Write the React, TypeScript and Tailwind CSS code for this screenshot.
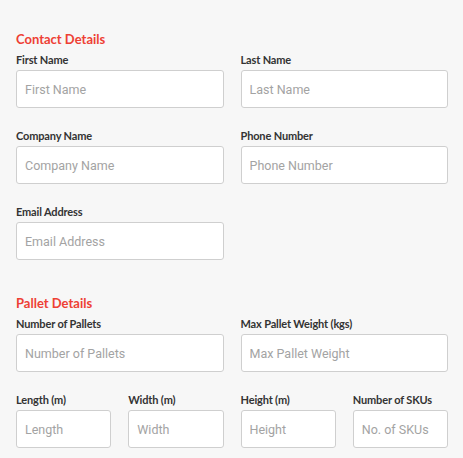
import React from "react";

type Field = {
  label: string;
  placeholder: string;
};

const contactRows: Field[][] = [
  [
    { label: "First Name", placeholder: "First Name" },
    { label: "Last Name", placeholder: "Last Name" },
  ],
  [
    { label: "Company Name", placeholder: "Company Name" },
    { label: "Phone Number", placeholder: "Phone Number" },
  ],
  [{ label: "Email Address", placeholder: "Email Address" }],
];

const palletTop: Field[] = [
  { label: "Number of Pallets", placeholder: "Number of Pallets" },
  { label: "Max Pallet Weight (kgs)", placeholder: "Max Pallet Weight" },
];

const palletDims: Field[] = [
  { label: "Length (m)", placeholder: "Length" },
  { label: "Width (m)", placeholder: "Width" },
  { label: "Height (m)", placeholder: "Height" },
  { label: "Number of SKUs", placeholder: "No. of SKUs" },
];

function SectionTitle({ children }: { children: React.ReactNode }) {
  return (
    <h2 className="mb-[6px] font-['Lato',sans-serif] text-[13px] font-bold leading-[16px] text-[#ee4034]">
      {children}
    </h2>
  );
}

function FormField({ label, placeholder }: Field) {
  return (
    <label className="flex min-w-0 flex-col">
      <span className="mb-[3px] font-['Lato',sans-serif] text-[11px] font-bold leading-[14px] tracking-[-0.15px] text-[#333333]">
        {label}
      </span>
      <input
        type="text"
        placeholder={placeholder}
        className="h-[38px] w-full rounded-[3px] border border-[#cfcfcf] bg-white px-[8px] font-['Roboto',sans-serif] text-[12.5px] text-[#333] outline-none placeholder:text-[#a3a3a3]"
      />
    </label>
  );
}

export default function App() {
  return (
    <div className="min-h-screen bg-[#f7f7f7] pl-4 pr-[15px] pt-[31px]">
      <section>
        <SectionTitle>Contact Details</SectionTitle>
        <div className="flex flex-col gap-[21px]">
          {contactRows.map((row, i) => (
            <div key={i} className="grid grid-cols-2 gap-x-[17px]">
              {row.map((f) => (
                <FormField key={f.label} {...f} />
              ))}
            </div>
          ))}
        </div>
      </section>

      <section className="mt-[35px]">
        <SectionTitle>Pallet Details</SectionTitle>
        <div className="flex flex-col gap-[21px]">
          <div className="grid grid-cols-2 gap-x-[17px]">
            {palletTop.map((f) => (
              <FormField key={f.label} {...f} />
            ))}
          </div>
          <div className="grid grid-cols-4 gap-x-[17px]">
            {palletDims.map((f) => (
              <FormField key={f.label} {...f} />
            ))}
          </div>
        </div>
      </section>
    </div>
  );
}
